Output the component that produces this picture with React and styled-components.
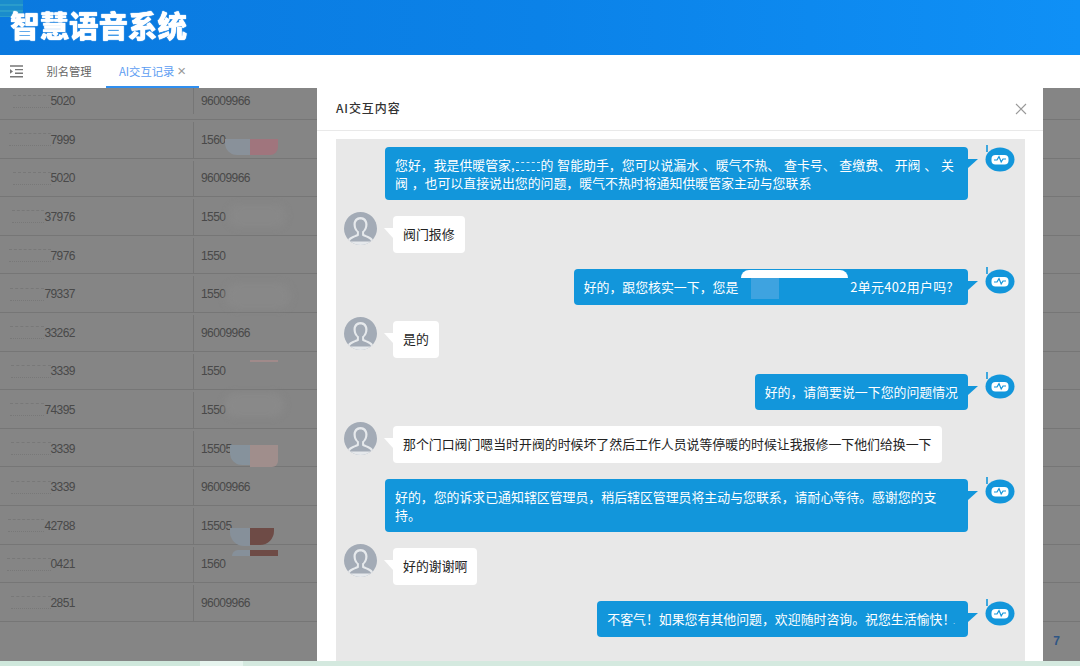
import React from "react";
import styled, { createGlobalStyle } from "styled-components";

const Global = createGlobalStyle`
  html, body { margin: 0; padding: 0; height: 666px; overflow: hidden; background: #fff; }
  body { font-family: "Noto Sans CJK SC", "Liberation Sans", sans-serif; }
  * { box-sizing: border-box; }
`;

const Page = styled.div`
  position: relative;
  width: 1080px;
  height: 666px;
  display: flex;
  flex-direction: column;
  overflow: hidden;
`;

const Header = styled.header`
  height: 55px;
  flex: none;
  display: flex;
  align-items: center;
  padding: 0 0 8px 10px;
  position: relative;
  background: linear-gradient(90deg, #0a79df 0%, #0b82e8 50%, #0f90f6 100%);
`;

const Title = styled.h1`
  margin: 0;
  font-size: 29.5px;
  line-height: 40px;
  font-weight: 900;
  color: #fff;
  text-shadow: 0 0 1px #fff, 0 0 1px #fff;
  filter: blur(0.5px);
`;

const LogoMark = styled.div`
  position: absolute;
  left: 0;
  top: 0;
  width: 23px;
  height: 17px;
  background: repeating-linear-gradient(180deg, #1a8ccc 0 4px, #2a9ccb 4px 6px);
  filter: blur(0.7px);
`;

const TabBar = styled.nav`
  height: 33px;
  flex: none;
  display: flex;
  align-items: center;
  background: #fff;
  position: relative;
`;

const MenuButton = styled.span`
  width: 32px;
  padding-left: 9px;
  display: flex;
  color: #777;
`;

const Tab = styled.span`
  height: 33px;
  width: ${(p) => p.$w}px;
  display: flex;
  align-items: center;
  justify-content: center;
  font-size: 11.3px;
  white-space: nowrap;
  color: ${(p) => (p.$active ? "#5c9df2" : "#666")};
  border-bottom: 2px solid ${(p) => (p.$active ? "#2f8ff0" : "transparent")};
`;

const TabClose = styled.span`
  margin-left: 3px;
  color: #999;
  font-size: 15px;
  line-height: 15px;
  font-family: "Liberation Sans", sans-serif;
`;

const TableArea = styled.main`
  flex: 1;
  position: relative;
  overflow: hidden;
  min-height: 0;
  background: #fff;
`;

const Row = styled.div`
  display: grid;
  grid-template-columns: 193px 1fr;
  height: ${(p) => (p.$first ? 32 : 38.6)}px;
  padding: ${(p) => (p.$first ? "0 0 5px" : "2px 0 0")};
  border-bottom: 1px solid #e2e2e2;
  font-family: "Liberation Sans", sans-serif;
  font-size: 12px;
  letter-spacing: -0.55px;
  color: #8c8c8c;
`;

const CellA = styled.div`
  display: flex;
  align-items: center;
  justify-content: flex-end;
  padding-right: 118px;
  box-shadow: 1px 0 0 #e2e2e2;
  position: relative;
`;

const Masked = styled.span`
  width: ${(p) => p.$w}px;
  height: 13px;
  flex: none;
  background: #fff;
  border-top: 1px dashed #e6e6e6;
  border-bottom: 1px dotted #e6e6e6;
`;

const CellB = styled.div`
  display: flex;
  align-items: center;
  padding-left: 8px;
`;

const Pager = styled.div`
  height: 39px;
  display: flex;
  align-items: center;
  justify-content: flex-end;
  padding-right: 20px;
  font: bold 12px "Liberation Sans", sans-serif;
  color: #5aa6ff;
`;

const Shade = styled.div`
  position: absolute;
  inset: 0;
  background: rgba(0, 0, 0, 0.48);
`;

const Smudge = styled.div`
  position: absolute;
  left: ${(p) => p.$x}px;
  top: ${(p) => p.$y}px;
  width: ${(p) => p.$w}px;
  height: ${(p) => p.$h}px;
  background: ${(p) => p.$c};
  border-radius: ${(p) => p.$r || "0"};
  filter: ${(p) => (p.$soft ? "blur(3px)" : "none")};
`;

const Strip = styled.footer`
  height: 5px;
  flex: none;
  background: linear-gradient(90deg, #cfe8dc 0 200px, #e6f4ee 200px 243px, #d4e9df 243px);
`;

const Modal = styled.section`
  position: absolute;
  left: 317px;
  top: 88px;
  width: 726px;
  height: 573px;
  background: #fff;
  display: flex;
  flex-direction: column;
`;

const ModalHead = styled.div`
  height: 43px;
  flex: none;
  display: flex;
  align-items: center;
  justify-content: space-between;
  padding: 0 16px 0 19px;
  border-bottom: 1px solid #e9e9e9;
`;

const ModalTitle = styled.h2`
  margin: 0 0 3px;
  font-size: 12px;
  font-weight: 500;
  letter-spacing: 0.9px;
  color: #333;
`;

const Close = styled.span`
  display: flex;
  color: #999;
`;

const Chat = styled.div`
  flex: 1;
  margin: 8px 18px 0 19px;
  background: #e8e8e8;
  padding: 8px 10px 0 8px;
  display: flex;
  flex-direction: column;
  gap: 16px;
  overflow: hidden;
`;

const MsgRow = styled.div`
  display: flex;
  justify-content: ${(p) => (p.$bot ? "flex-end" : "flex-start")};
  align-items: flex-start;
  gap: ${(p) => (p.$bot ? 17 : 16)}px;
`;

const Bubble = styled.div`
  position: relative;
  max-width: 583px;
  min-height: ${(p) => (p.$bot ? 36 : 37)}px;
  padding: 9px 10px;
  font-size: 12.9px;
  line-height: 17.5px;
  word-spacing: 0.9px;
  border-radius: 4px;
  color: ${(p) => (p.$bot ? "#fff" : "#222")};
  background: ${(p) => (p.$bot ? "#1296db" : "#fff")};
  &::after {
    content: "";
    position: absolute;
    top: 12px;
    width: 0;
    height: 0;
    ${(p) =>
      p.$bot
        ? `left: 100%; border-right: 10px solid transparent; border-top: 9px solid #1296db;`
        : `right: 100%; border-left: 9px solid transparent; border-top: 10px solid #fff;`}
  }
`;

const Gap = styled.span`
  display: inline-block;
  width: ${(p) => p.$w}px;
`;

const Tail = styled.span`
  letter-spacing: 0.35px;
  margin-right: 5px;
`;

const TinyDot = styled.span`
  font-size: 6px;
  line-height: 0;
  margin-left: -2px;
  margin-right: 3px;
  vertical-align: baseline;
`;

const Hump = styled.span`
  position: absolute;
  left: 167px;
  top: 1px;
  width: 107px;
  height: 8px;
  background: #fff;
  border-radius: 30px 30px 0 0;
`;

const Veil = styled.span`
  position: absolute;
  left: 177px;
  top: 9px;
  width: 28px;
  height: 21px;
  background: #3ea3e0;
`;

const Dashes = styled.span`
  display: inline-block;
  width: 24px;
  height: 9px;
  margin: 0 1px;
  vertical-align: -1px;
  border-bottom: 1px dashed #fff;
  border-top: 1px dashed #cfe9f8;
`;

const RobotWrap = styled.span`
  flex: none;
  margin-top: -2px;
  width: 30px;
  height: 27px;
  display: flex;
`;

const AvatarWrap = styled.span`
  flex: none;
  margin-top: -4px;
  width: 33px;
  height: 33px;
  display: flex;
`;

const Robot = () => (
  <RobotWrap>
    <svg width="30" height="27" viewBox="0 0 30 27">
      <path d="M2 0v7" stroke="#1296db" strokeWidth="1.6" fill="none" />
      <ellipse cx="15" cy="14.5" rx="14.5" ry="12" fill="#1296db" />
      <rect x="6.5" y="10" width="17" height="9.5" rx="4" fill="#fff" />
      <path d="M9 15h3l2-3.4 2.2 5.4 1.8-3h3" stroke="#1296db" strokeWidth="1.2" fill="none" />
    </svg>
  </RobotWrap>
);

const Avatar = () => (
  <AvatarWrap>
    <svg width="33" height="33" viewBox="0 0 33 33">
      <defs>
        <clipPath id="av">
          <circle cx="16.5" cy="16.5" r="16.5" />
        </clipPath>
      </defs>
      <circle cx="16.5" cy="16.5" r="16.5" fill="#a3abb6" />
      <g clipPath="url(#av)" fill="#e6e9ec">
        <path d="M16.5 5c-4.3 0-7 3.2-7 7.4 0 3.2 1.5 6 3.4 7.6v2.2c-3 1.6-8.8 2.6-9.3 6.7v5h25.8v-5c-.5-4.1-6.3-5.1-9.3-6.7V20c1.9-1.6 3.4-4.4 3.4-7.6 0-4.2-2.7-7.4-7-7.4z" />
      </g>
      <g clipPath="url(#av)" fill="#a3abb6">
        <path d="M16.5 7.5c-3 0-4.8 2.2-4.8 5.2 0 3 1.5 5.6 3.2 6.8v4.1c-2.6 1.8-8.6 2.8-9.1 6h21.4c-.5-3.2-6.5-4.2-9.1-6v-4.1c1.7-1.2 3.2-3.8 3.2-6.8 0-3-1.8-5.2-4.8-5.2z" />
      </g>
    </svg>
  </AvatarWrap>
);

const MenuIcon = () => (
  <svg width="15" height="13" viewBox="0 0 15 13" stroke="currentColor" strokeWidth="1.4" fill="none">
    <path d="M1 1h13M6 4.6h8M6 8.2h8M1 11.8h13" />
    <path d="M1 4l3 2.4L1 8.8z" fill="currentColor" stroke="none" />
  </svg>
);

const rows = [
  [38, "5020", "96009966"],
  [42, "7999", "1560"],
  [38, "5020", "96009966"],
  [32, "37976", "1550"],
  [42, "7976", "1550"],
  [34, "79337", "1550"],
  [34, "33262", "96009966"],
  [40, "3339", "1550"],
  [34, "74395", "1550"],
  [40, "3339", "15505"],
  [40, "3339", "96009966"],
  [36, "42788", "15505"],
  [44, "0421", "1560"],
  [40, "2851", "96009966"],
];

const smudges = [
  { x: 225, y: 51, w: 25, h: 16, c: "#89919a", r: "0 0 0 12px" },
  { x: 250, y: 51, w: 28, h: 16, c: "#a0757d", r: "0 0 8px 0" },
  { x: 228, y: 117, w: 58, h: 22, c: "#888888", r: "20px", soft: true },
  { x: 225, y: 195, w: 66, h: 26, c: "#888888", r: "20px", soft: true },
  { x: 250, y: 272, w: 28, h: 2, c: "#a08a8a" },
  { x: 224, y: 305, w: 60, h: 24, c: "#898989", r: "20px", soft: true },
  { x: 230, y: 357, w: 20, h: 20, c: "#86929c", r: "0 0 0 12px" },
  { x: 250, y: 357, w: 28, h: 22, c: "#a08e8c", r: "0 0 6px 0" },
  { x: 230, y: 440, w: 20, h: 18, c: "#86909a", r: "0 0 0 14px" },
  { x: 250, y: 440, w: 24, h: 17, c: "#6e4b46", r: "0 0 14px 0" },
  { x: 250, y: 462, w: 28, h: 6, c: "#6e4b46" },
  { x: 232, y: 462, w: 18, h: 6, c: "#86909a", r: "8px 0 0 0" },
];

export default function App() {
  return (
    <Page>
      <Global />
      <Header>
        <LogoMark />
        <Title>智慧语音系统</Title>
      </Header>
      <TabBar>
        <MenuButton>
          <MenuIcon />
        </MenuButton>
        <Tab $w={74}>别名管理</Tab>
        <Tab $w={93} $active>
          AI交互记录<TabClose>×</TabClose>
        </Tab>
      </TabBar>
      <TableArea>
        {rows.map(([mask, tail, second], i) => (
          <Row key={i} $first={i === 0}>
            <CellA>
              <Masked $w={mask} />
              {tail}
            </CellA>
            <CellB>{second}</CellB>
          </Row>
        ))}
        <Pager>7</Pager>
        <Shade />
        {smudges.map((s, i) => (
          <Smudge key={i} $x={s.x} $y={s.y} $w={s.w} $h={s.h} $c={s.c} $r={s.r} $soft={s.soft} />
        ))}
      </TableArea>
      <Strip />
      <Modal>
        <ModalHead>
          <ModalTitle>AI交互内容</ModalTitle>
          <Close>
            <svg width="12" height="12" viewBox="0 0 12 12" stroke="currentColor" strokeWidth="1.1">
              <path d="M1 1l10 10M11 1L1 11" />
            </svg>
          </Close>
        </ModalHead>
        <Chat>
          <MsgRow $bot>
            <Bubble $bot>
              您好，我是供暖管家,<Dashes />的 智能助手，您可以说漏水 、暖气不热、 查卡号、 查缴费、 开阀 、 关阀 ，也可以直接说出您的问题，暖气不热时将通知供暖管家主动与您联系
            </Bubble>
            <Robot />
          </MsgRow>
          <MsgRow>
            <Avatar />
            <Bubble>阀门报修</Bubble>
          </MsgRow>
          <MsgRow $bot>
            <Bubble $bot>
              好的，跟您核实一下，您是<Gap $w={112} />
              <Tail>2单元402用户吗?</Tail>
              <Hump />
              <Veil />
            </Bubble>
            <Robot />
          </MsgRow>
          <MsgRow>
            <Avatar />
            <Bubble>是的</Bubble>
          </MsgRow>
          <MsgRow $bot>
            <Bubble $bot>好的，请简要说一下您的问题情况</Bubble>
            <Robot />
          </MsgRow>
          <MsgRow>
            <Avatar />
            <Bubble>那个门口阀门嗯当时开阀的时候坏了然后工作人员说等停暖的时候让我报修一下他们给换一下</Bubble>
          </MsgRow>
          <MsgRow $bot>
            <Bubble $bot>好的，您的诉求已通知辖区管理员，稍后辖区管理员将主动与您联系，请耐心等待。感谢您的支持。</Bubble>
            <Robot />
          </MsgRow>
          <MsgRow>
            <Avatar />
            <Bubble>好的谢谢啊</Bubble>
          </MsgRow>
          <MsgRow $bot>
            <Bubble $bot>不客气！如果您有其他问题，欢迎随时咨询。祝您生活愉快！<TinyDot>.</TinyDot></Bubble>
            <Robot />
          </MsgRow>
        </Chat>
      </Modal>
    </Page>
  );
}
